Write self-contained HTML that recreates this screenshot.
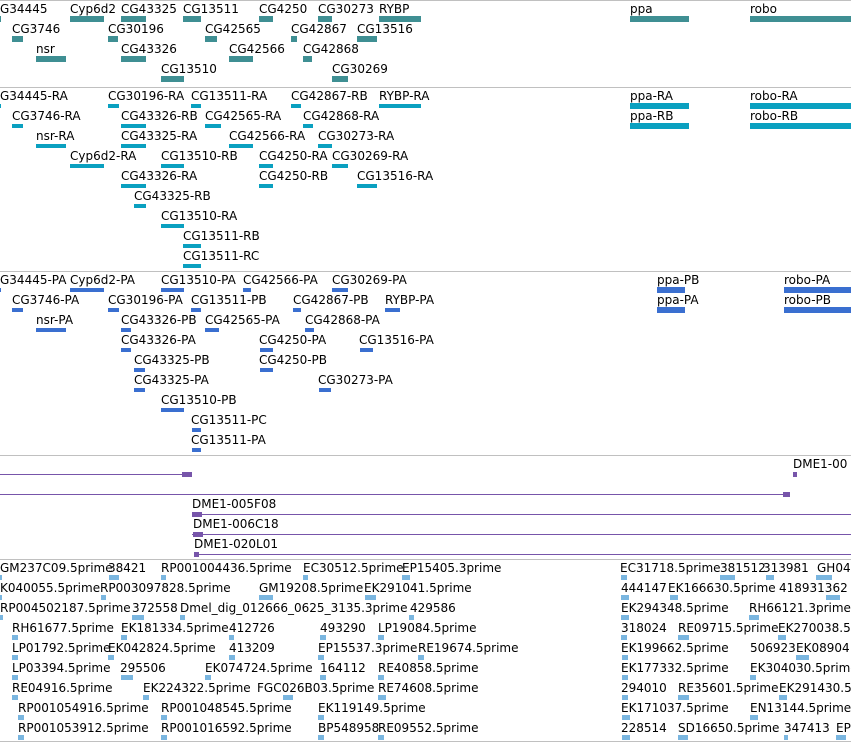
<!DOCTYPE html>
<html><head><meta charset="utf-8"><style>
body{margin:0;width:851px;height:743px;background:#fff;position:relative;overflow:hidden;font-family:"DejaVu Sans","Liberation Sans",sans-serif;font-size:12px;}
.l{position:absolute;white-space:nowrap;line-height:14px;color:#000;}
.g{position:absolute;height:6px;}
.a{background:#3f8f93}.b{background:#0aa0c0;height:4px}.c{background:#3a6fd0;height:4px}.e{background:#7ab6e0;height:5px}
.s{position:absolute;left:0;width:851px;height:1px;background:#c0c0c0}
.p{position:absolute;height:1px;background:#7755aa}
.ph{position:absolute;height:5px;background:#7755aa}
</style></head><body>
<div class="s" style="top:0"></div>
<div class="s" style="top:87px"></div>
<div class="s" style="top:271px"></div>
<div class="s" style="top:455px"></div>
<div class="s" style="top:559px"></div>
<div class="s" style="top:741px"></div>

<!-- track1 -->
<div class="l" style="left:0;top:2px">G34445</div><div class="g a" style="left:0;top:16px;width:1px"></div>
<div class="l" style="left:70px;top:2px">Cyp6d2</div><div class="g a" style="left:70px;top:16px;width:34px"></div>
<div class="l" style="left:121px;top:2px">CG43325</div><div class="g a" style="left:121px;top:16px;width:25px"></div>
<div class="l" style="left:183px;top:2px">CG13511</div><div class="g a" style="left:183px;top:16px;width:18px"></div>
<div class="l" style="left:259px;top:2px">CG4250</div><div class="g a" style="left:259px;top:16px;width:14px"></div>
<div class="l" style="left:318px;top:2px">CG30273</div><div class="g a" style="left:318px;top:16px;width:14px"></div>
<div class="l" style="left:379px;top:2px">RYBP</div><div class="g a" style="left:379px;top:16px;width:42px"></div>
<div class="l" style="left:630px;top:2px">ppa</div><div class="g a" style="left:630px;top:16px;width:59px"></div>
<div class="l" style="left:750px;top:2px">robo</div><div class="g a" style="left:750px;top:16px;width:101px"></div>
<div class="l" style="left:12px;top:22px">CG3746</div><div class="g a" style="left:12px;top:36px;width:11px"></div>
<div class="l" style="left:108px;top:22px">CG30196</div><div class="g a" style="left:108px;top:36px;width:10px"></div>
<div class="l" style="left:205px;top:22px">CG42565</div><div class="g a" style="left:205px;top:36px;width:12px"></div>
<div class="l" style="left:291px;top:22px">CG42867</div><div class="g a" style="left:291px;top:36px;width:6px"></div>
<div class="l" style="left:357px;top:22px">CG13516</div><div class="g a" style="left:357px;top:36px;width:20px"></div>
<div class="l" style="left:36px;top:42px">nsr</div><div class="g a" style="left:36px;top:56px;width:30px"></div>
<div class="l" style="left:121px;top:42px">CG43326</div><div class="g a" style="left:121px;top:56px;width:25px"></div>
<div class="l" style="left:229px;top:42px">CG42566</div><div class="g a" style="left:229px;top:56px;width:24px"></div>
<div class="l" style="left:303px;top:42px">CG42868</div><div class="g a" style="left:303px;top:56px;width:9px"></div>
<div class="l" style="left:161px;top:62px">CG13510</div><div class="g a" style="left:161px;top:76px;width:23px"></div>
<div class="l" style="left:332px;top:62px">CG30269</div><div class="g a" style="left:332px;top:76px;width:16px"></div>

<!-- track2 -->
<div class="l" style="left:0;top:89px">G34445-RA</div><div class="g b" style="left:0;top:104px;width:1px"></div>
<div class="l" style="left:108px;top:89px">CG30196-RA</div><div class="g b" style="left:108px;top:104px;width:11px"></div>
<div class="l" style="left:191px;top:89px">CG13511-RA</div><div class="g b" style="left:191px;top:104px;width:10px"></div>
<div class="l" style="left:291px;top:89px">CG42867-RB</div><div class="g b" style="left:291px;top:104px;width:10px"></div>
<div class="l" style="left:379px;top:89px">RYBP-RA</div><div class="g b" style="left:379px;top:104px;width:42px"></div>
<div class="l" style="left:630px;top:89px">ppa-RA</div><div class="g b" style="left:630px;top:103px;width:59px;height:6px"></div>
<div class="l" style="left:750px;top:89px">robo-RA</div><div class="g b" style="left:750px;top:103px;width:101px;height:6px"></div>
<div class="l" style="left:12px;top:109px">CG3746-RA</div><div class="g b" style="left:12px;top:124px;width:11px"></div>
<div class="l" style="left:121px;top:109px">CG43326-RB</div><div class="g b" style="left:121px;top:124px;width:25px"></div>
<div class="l" style="left:205px;top:109px">CG42565-RA</div><div class="g b" style="left:205px;top:124px;width:16px"></div>
<div class="l" style="left:303px;top:109px">CG42868-RA</div><div class="g b" style="left:303px;top:124px;width:10px"></div>
<div class="l" style="left:630px;top:109px">ppa-RB</div><div class="g b" style="left:630px;top:123px;width:59px;height:6px"></div>
<div class="l" style="left:750px;top:109px">robo-RB</div><div class="g b" style="left:750px;top:123px;width:101px;height:6px"></div>
<div class="l" style="left:36px;top:129px">nsr-RA</div><div class="g b" style="left:36px;top:144px;width:30px"></div>
<div class="l" style="left:121px;top:129px">CG43325-RA</div><div class="g b" style="left:121px;top:144px;width:25px"></div>
<div class="l" style="left:229px;top:129px">CG42566-RA</div><div class="g b" style="left:229px;top:144px;width:24px"></div>
<div class="l" style="left:318px;top:129px">CG30273-RA</div><div class="g b" style="left:318px;top:144px;width:14px"></div>
<div class="l" style="left:70px;top:149px">Cyp6d2-RA</div><div class="g b" style="left:70px;top:164px;width:34px"></div>
<div class="l" style="left:161px;top:149px">CG13510-RB</div><div class="g b" style="left:161px;top:164px;width:23px"></div>
<div class="l" style="left:259px;top:149px">CG4250-RA</div><div class="g b" style="left:259px;top:164px;width:14px"></div>
<div class="l" style="left:332px;top:149px">CG30269-RA</div><div class="g b" style="left:332px;top:164px;width:16px"></div>
<div class="l" style="left:121px;top:169px">CG43326-RA</div><div class="g b" style="left:121px;top:184px;width:25px"></div>
<div class="l" style="left:259px;top:169px">CG4250-RB</div><div class="g b" style="left:259px;top:184px;width:14px"></div>
<div class="l" style="left:357px;top:169px">CG13516-RA</div><div class="g b" style="left:357px;top:184px;width:20px"></div>
<div class="l" style="left:134px;top:189px">CG43325-RB</div><div class="g b" style="left:134px;top:204px;width:12px"></div>
<div class="l" style="left:161px;top:209px">CG13510-RA</div><div class="g b" style="left:161px;top:224px;width:23px"></div>
<div class="l" style="left:183px;top:229px">CG13511-RB</div><div class="g b" style="left:183px;top:244px;width:18px"></div>
<div class="l" style="left:183px;top:249px">CG13511-RC</div><div class="g b" style="left:183px;top:264px;width:18px"></div>

<!-- track3 -->
<div class="l" style="left:0;top:273px">G34445-PA</div><div class="g c" style="left:0;top:288px;width:1px"></div>
<div class="l" style="left:70px;top:273px">Cyp6d2-PA</div><div class="g c" style="left:70px;top:288px;width:34px"></div>
<div class="l" style="left:161px;top:273px">CG13510-PA</div><div class="g c" style="left:161px;top:288px;width:23px"></div>
<div class="l" style="left:243px;top:273px">CG42566-PA</div><div class="g c" style="left:243px;top:288px;width:8px"></div>
<div class="l" style="left:332px;top:273px">CG30269-PA</div><div class="g c" style="left:332px;top:288px;width:16px"></div>
<div class="l" style="left:657px;top:273px">ppa-PB</div><div class="g c" style="left:657px;top:287px;width:28px;height:6px"></div>
<div class="l" style="left:784px;top:273px">robo-PA</div><div class="g c" style="left:784px;top:287px;width:67px;height:6px"></div>
<div class="l" style="left:12px;top:293px">CG3746-PA</div><div class="g c" style="left:12px;top:308px;width:11px"></div>
<div class="l" style="left:108px;top:293px">CG30196-PA</div><div class="g c" style="left:108px;top:308px;width:11px"></div>
<div class="l" style="left:191px;top:293px">CG13511-PB</div><div class="g c" style="left:191px;top:308px;width:10px"></div>
<div class="l" style="left:293px;top:293px">CG42867-PB</div><div class="g c" style="left:293px;top:308px;width:8px"></div>
<div class="l" style="left:385px;top:293px">RYBP-PA</div><div class="g c" style="left:385px;top:308px;width:15px"></div>
<div class="l" style="left:657px;top:293px">ppa-PA</div><div class="g c" style="left:657px;top:307px;width:28px;height:6px"></div>
<div class="l" style="left:784px;top:293px">robo-PB</div><div class="g c" style="left:784px;top:307px;width:67px;height:6px"></div>
<div class="l" style="left:36px;top:313px">nsr-PA</div><div class="g c" style="left:36px;top:328px;width:30px"></div>
<div class="l" style="left:121px;top:313px">CG43326-PB</div><div class="g c" style="left:121px;top:328px;width:10px"></div>
<div class="l" style="left:205px;top:313px">CG42565-PA</div><div class="g c" style="left:205px;top:328px;width:14px"></div>
<div class="l" style="left:305px;top:313px">CG42868-PA</div><div class="g c" style="left:305px;top:328px;width:9px"></div>
<div class="l" style="left:121px;top:333px">CG43326-PA</div><div class="g c" style="left:121px;top:348px;width:10px"></div>
<div class="l" style="left:259px;top:333px">CG4250-PA</div><div class="g c" style="left:260px;top:348px;width:13px"></div>
<div class="l" style="left:359px;top:333px">CG13516-PA</div><div class="g c" style="left:360px;top:348px;width:13px"></div>
<div class="l" style="left:134px;top:353px">CG43325-PB</div><div class="g c" style="left:134px;top:368px;width:11px"></div>
<div class="l" style="left:259px;top:353px">CG4250-PB</div><div class="g c" style="left:260px;top:368px;width:13px"></div>
<div class="l" style="left:134px;top:373px">CG43325-PA</div><div class="g c" style="left:134px;top:388px;width:11px"></div>
<div class="l" style="left:318px;top:373px">CG30273-PA</div><div class="g c" style="left:319px;top:388px;width:12px"></div>
<div class="l" style="left:161px;top:393px">CG13510-PB</div><div class="g c" style="left:161px;top:408px;width:23px"></div>
<div class="l" style="left:191px;top:413px">CG13511-PC</div><div class="g c" style="left:192px;top:428px;width:9px"></div>
<div class="l" style="left:191px;top:433px">CG13511-PA</div><div class="g c" style="left:192px;top:448px;width:9px"></div>

<!-- track4 -->
<div class="p" style="left:0;top:474px;width:192px"></div><div class="ph" style="left:182px;top:472px;width:10px"></div>
<div class="l" style="left:793px;top:457px">DME1-00</div><div class="ph" style="left:793px;top:472px;width:4px"></div>
<div class="p" style="left:0;top:494px;width:790px"></div><div class="ph" style="left:783px;top:492px;width:7px"></div>
<div class="l" style="left:192px;top:497px">DME1-005F08</div>
<div class="p" style="left:192px;top:514px;width:659px"></div><div class="ph" style="left:192px;top:512px;width:10px"></div>
<div class="l" style="left:193px;top:517px">DME1-006C18</div>
<div class="p" style="left:192px;top:534px;width:659px"></div><div class="ph" style="left:193px;top:532px;width:10px"></div>
<div class="l" style="left:194px;top:537px">DME1-020L01</div>
<div class="p" style="left:194px;top:554px;width:657px"></div><div class="ph" style="left:194px;top:552px;width:5px"></div>

<!-- track5 -->
<div class="l" style="left:0;top:561px">GM237C09.5prime</div><div class="g e" style="left:0;top:575px;width:2px"></div>
<div class="l" style="left:108px;top:561px">38421</div><div class="g e" style="left:109px;top:575px;width:10px"></div>
<div class="l" style="left:161px;top:561px">RP001004436.5prime</div><div class="g e" style="left:161px;top:575px;width:5px"></div>
<div class="l" style="left:303px;top:561px">EC30512.5prime</div><div class="g e" style="left:303px;top:575px;width:5px"></div>
<div class="l" style="left:402px;top:561px">EP15405.3prime</div><div class="g e" style="left:402px;top:575px;width:8px"></div>
<div class="l" style="left:620px;top:561px">EC31718.5prime</div><div class="g e" style="left:621px;top:575px;width:6px"></div>
<div class="l" style="left:720px;top:561px">381512</div><div class="g e" style="left:720px;top:575px;width:15px"></div>
<div class="l" style="left:763px;top:561px">313981</div><div class="g e" style="left:766px;top:575px;width:8px"></div>
<div class="l" style="left:817px;top:561px">GH04</div><div class="g e" style="left:816px;top:575px;width:16px"></div>
<div class="l" style="left:0;top:581px">K040055.5prime</div><div class="g e" style="left:0;top:595px;width:2px"></div>
<div class="l" style="left:100px;top:581px">RP003097828.5prime</div><div class="g e" style="left:101px;top:595px;width:5px"></div>
<div class="l" style="left:259px;top:581px">GM19208.5prime</div><div class="g e" style="left:259px;top:595px;width:14px"></div>
<div class="l" style="left:364px;top:581px">EK291041.5prime</div><div class="g e" style="left:365px;top:595px;width:11px"></div>
<div class="l" style="left:621px;top:581px">444147</div><div class="g e" style="left:621px;top:595px;width:8px"></div>
<div class="l" style="left:668px;top:581px">EK166630.5prime</div><div class="g e" style="left:670px;top:595px;width:8px"></div>
<div class="l" style="left:779px;top:581px">418931362</div><div class="g e" style="left:826px;top:595px;width:14px"></div>
<div class="l" style="left:0;top:601px">RP004502187.5prime</div><div class="g e" style="left:0;top:615px;width:3px"></div>
<div class="l" style="left:132px;top:601px">372558</div><div class="g e" style="left:132px;top:615px;width:12px"></div>
<div class="l" style="left:180px;top:601px">Dmel_dig_012666_0625_3135.3prime</div><div class="g e" style="left:180px;top:615px;width:5px"></div>
<div class="l" style="left:410px;top:601px">429586</div><div class="g e" style="left:409px;top:615px;width:5px"></div>
<div class="l" style="left:621px;top:601px">EK294348.5prime</div><div class="g e" style="left:621px;top:615px;width:8px"></div>
<div class="l" style="left:749px;top:601px">RH66121.3prime</div><div class="g e" style="left:749px;top:615px;width:10px"></div>
<div class="l" style="left:12px;top:621px">RH61677.5prime</div><div class="g e" style="left:12px;top:635px;width:6px"></div>
<div class="l" style="left:121px;top:621px">EK181334.5prime</div><div class="g e" style="left:121px;top:635px;width:6px"></div>
<div class="l" style="left:229px;top:621px">412726</div><div class="g e" style="left:229px;top:635px;width:5px"></div>
<div class="l" style="left:320px;top:621px">493290</div><div class="g e" style="left:320px;top:635px;width:6px"></div>
<div class="l" style="left:378px;top:621px">LP19084.5prime</div><div class="g e" style="left:378px;top:635px;width:6px"></div>
<div class="l" style="left:621px;top:621px">318024</div><div class="g e" style="left:621px;top:635px;width:6px"></div>
<div class="l" style="left:678px;top:621px">RE09715.5prime</div><div class="g e" style="left:678px;top:635px;width:11px"></div>
<div class="l" style="left:778px;top:621px">EK270038.5</div><div class="g e" style="left:778px;top:635px;width:8px"></div>
<div class="l" style="left:12px;top:641px">LP01792.5prime</div><div class="g e" style="left:12px;top:655px;width:6px"></div>
<div class="l" style="left:108px;top:641px">EK042824.5prime</div><div class="g e" style="left:108px;top:655px;width:6px"></div>
<div class="l" style="left:229px;top:641px">413209</div><div class="g e" style="left:229px;top:655px;width:6px"></div>
<div class="l" style="left:318px;top:641px">EP15537.3prime</div><div class="g e" style="left:318px;top:655px;width:6px"></div>
<div class="l" style="left:418px;top:641px">RE19674.5prime</div><div class="g e" style="left:418px;top:655px;width:6px"></div>
<div class="l" style="left:621px;top:641px">EK199662.5prime</div><div class="g e" style="left:622px;top:655px;width:6px"></div>
<div class="l" style="left:750px;top:641px">506923</div><div class="g e" style="left:796px;top:655px;width:13px"></div>
<div class="l" style="left:796px;top:641px">EK08904</div>
<div class="l" style="left:12px;top:661px">LP03394.5prime</div><div class="g e" style="left:12px;top:675px;width:6px"></div>
<div class="l" style="left:120px;top:661px">295506</div><div class="g e" style="left:121px;top:675px;width:12px"></div>
<div class="l" style="left:205px;top:661px">EK074724.5prime</div><div class="g e" style="left:205px;top:675px;width:6px"></div>
<div class="l" style="left:320px;top:661px">164112</div><div class="g e" style="left:320px;top:675px;width:6px"></div>
<div class="l" style="left:378px;top:661px">RE40858.5prime</div><div class="g e" style="left:378px;top:675px;width:6px"></div>
<div class="l" style="left:621px;top:661px">EK177332.5prime</div><div class="g e" style="left:622px;top:675px;width:6px"></div>
<div class="l" style="left:750px;top:661px">EK304030.5prime</div><div class="g e" style="left:750px;top:675px;width:6px"></div>
<div class="l" style="left:12px;top:681px">RE04916.5prime</div><div class="g e" style="left:12px;top:695px;width:6px"></div>
<div class="l" style="left:143px;top:681px">EK224322.5prime</div><div class="g e" style="left:143px;top:695px;width:6px"></div>
<div class="l" style="left:257px;top:681px">FGC026B03.5prime</div><div class="g e" style="left:283px;top:695px;width:10px"></div>
<div class="l" style="left:378px;top:681px">RE74608.5prime</div><div class="g e" style="left:378px;top:695px;width:8px"></div>
<div class="l" style="left:621px;top:681px">294010</div><div class="g e" style="left:622px;top:695px;width:6px"></div>
<div class="l" style="left:678px;top:681px">RE35601.5prime</div><div class="g e" style="left:678px;top:695px;width:11px"></div>
<div class="l" style="left:779px;top:681px">EK291430.5</div><div class="g e" style="left:779px;top:695px;width:8px"></div>
<div class="l" style="left:18px;top:701px">RP001054916.5prime</div><div class="g e" style="left:18px;top:715px;width:6px"></div>
<div class="l" style="left:161px;top:701px">RP001048545.5prime</div><div class="g e" style="left:161px;top:715px;width:6px"></div>
<div class="l" style="left:318px;top:701px">EK119149.5prime</div><div class="g e" style="left:318px;top:715px;width:6px"></div>
<div class="l" style="left:621px;top:701px">EK171037.5prime</div><div class="g e" style="left:622px;top:715px;width:8px"></div>
<div class="l" style="left:750px;top:701px">EN13144.5prime</div><div class="g e" style="left:750px;top:715px;width:8px"></div>
<div class="l" style="left:18px;top:721px">RP001053912.5prime</div><div class="g e" style="left:18px;top:735px;width:6px"></div>
<div class="l" style="left:161px;top:721px">RP001016592.5prime</div><div class="g e" style="left:161px;top:735px;width:6px"></div>
<div class="l" style="left:318px;top:721px">BP548958</div><div class="g e" style="left:318px;top:735px;width:6px"></div>
<div class="l" style="left:378px;top:721px">RE09552.5prime</div><div class="g e" style="left:378px;top:735px;width:6px"></div>
<div class="l" style="left:621px;top:721px">228514</div><div class="g e" style="left:622px;top:735px;width:8px"></div>
<div class="l" style="left:678px;top:721px">SD16650.5prime</div><div class="g e" style="left:678px;top:735px;width:10px"></div>
<div class="l" style="left:784px;top:721px">347413</div><div class="g e" style="left:784px;top:735px;width:4px"></div>
<div class="l" style="left:836px;top:721px">EP</div><div class="g e" style="left:836px;top:735px;width:10px"></div>
</body></html>
